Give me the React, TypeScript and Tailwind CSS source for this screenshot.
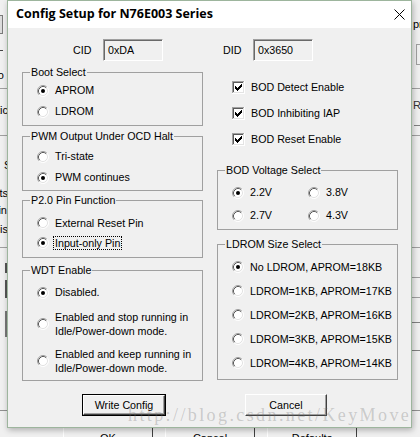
import React from "react";

const SANS = { fontFamily: '"Liberation Sans", Arial, sans-serif' };

function Radio({ checked }: { checked?: boolean }) {
  return (
    <svg width="12" height="12" viewBox="0 0 12 12" className="shrink-0">
      <circle cx="6" cy="6" r="5" fill="#fff" />
      <path d="M9.89 2.11 A5.5 5.5 0 0 0 2.11 9.89" fill="none" stroke="#a0a0a0" />
      <path d="M2.11 9.89 A5.5 5.5 0 0 0 9.89 2.11" fill="none" stroke="#ffffff" />
      <path d="M9.18 2.82 A4.5 4.5 0 0 0 2.82 9.18" fill="none" stroke="#5a5a5a" />
      <path d="M2.82 9.18 A4.5 4.5 0 0 0 9.18 2.82" fill="none" stroke="#e3e3e3" />
      {checked && <circle cx="6" cy="6" r="2" fill="#000" />}
    </svg>
  );
}

function CheckBox() {
  const tops = [5, 6, 7, 6, 5, 4, 3];
  return (
    <svg width="13" height="13" viewBox="0 0 13 13" shapeRendering="crispEdges" className="shrink-0">
      <rect x="0" y="0" width="13" height="13" fill="#fff" />
      <path d="M0 0.5H12M0.5 0V12" stroke="#a0a0a0" />
      <path d="M1 1.5H11M1.5 1V11" stroke="#5a5a5a" />
      <path d="M0 12.5H13M12.5 0V13" stroke="#ffffff" />
      <path d="M1 11.5H12M11.5 1V12" stroke="#e3e3e3" />
      {tops.map((t, i) => (
        <rect key={i} x={3 + i} y={t} width="1" height="3" fill="#000" />
      ))}
    </svg>
  );
}

function Group({
  label,
  className,
  children,
}: {
  label: string;
  className: string;
  children: React.ReactNode;
}) {
  return (
    <div className={`relative border border-[#a0a0a0] ${className}`}>
      <span className="absolute left-[7px] top-[-7px] bg-[#f0f0f0] px-[1px] leading-[13px] whitespace-nowrap">
        {label}
      </span>
      {children}
    </div>
  );
}

function RadioRow({
  label,
  checked,
  h,
  focus,
}: {
  label: string;
  checked?: boolean;
  h: string;
  focus?: boolean;
}) {
  return (
    <div className={`flex items-center ${h}`}>
      <Radio checked={checked} />
      {focus ? (
        <span className="ml-[4px] border border-dotted border-black px-[1px] leading-[12px] whitespace-nowrap">
          {label}
        </span>
      ) : (
        <span className="ml-[6px] whitespace-nowrap">{label}</span>
      )}
    </div>
  );
}

function CheckRow({ label }: { label: string }) {
  return (
    <div className="flex items-center h-[26px]">
      <CheckBox />
      <span className="ml-[6px] whitespace-nowrap">{label}</span>
    </div>
  );
}

function EditBox({ value }: { value: string }) {
  return (
    <div className="w-[60px] h-[22px] border border-t-[#a0a0a0] border-l-[#a0a0a0] border-b-white border-r-white shadow-[inset_1px_1px_0_#696969] flex items-center pl-[4px]">
      {value}
    </div>
  );
}

function Btn({ label, def, w }: { label: string; def?: boolean; w: string }) {
  const inner = (
    <div className="h-full w-full flex items-center justify-center border border-t-white border-l-white border-b-[#404040] border-r-[#404040] shadow-[inset_-1px_-1px_0_#a0a0a0] bg-[#f0f0f0]">
      {label}
    </div>
  );
  return def ? (
    <div className={`${w} h-[22px] border border-black`}>{inner}</div>
  ) : (
    <div className={`${w} h-[22px]`}>{inner}</div>
  );
}

function ParentButton({ label, left }: { label: string; left: string }) {
  return (
    <div
      className={`absolute ${left} top-[423px] w-[90px] h-[30px] border border-t-white border-l-white border-b-[#404040] border-r-[#404040] flex items-center justify-center text-[11px]`}
    >
      {label}
    </div>
  );
}

export default function App() {
  return (
    <div
      className="relative w-[420px] h-[437px] overflow-hidden bg-[#f0f0f0] text-black text-[10.7px]"
      style={SANS}
    >
      {/* Parent window fragments (behind the dialog) */}
      <div className="absolute left-[-12px] top-[15px] w-[15px] h-[19px] border border-[#7a7a7a] bg-[#dcdcdc]" />
      <div className="absolute left-0 top-[50px] w-[3px] h-[1px] bg-[#444]" />
      <div className="absolute right-[416px] top-[68px] text-[11px] leading-[14px]">Info</div>
      <div className="absolute left-0 top-[88px] w-[420px] h-[1px] bg-[#a0a0a0]" />
      <div className="absolute right-[412px] top-[103px] text-[11px] leading-[14px]">Statistic</div>
      <div className="absolute left-0 top-[135px] w-[420px] h-[1px] bg-[#a0a0a0]" />
      <div className="absolute left-[4px] top-[158px] text-[11px] leading-[14px]">S</div>
      <div className="absolute right-[412px] top-[186px] text-[11px] leading-[14px]">Counts</div>
      <div className="absolute right-[413px] top-[203px] text-[11px] leading-[14px]">Pin</div>
      <div className="absolute right-[412px] top-[222px] text-[11px] leading-[14px]">Dis</div>
      <div className="absolute left-0 top-[247px] w-[420px] h-[1px] bg-[#a0a0a0]" />
      <div className="absolute left-[5px] top-[263px] w-[2px] h-[10px] bg-[#555]" />
      <div className="absolute left-[5px] top-[280px] w-[2px] h-[18px] bg-[#555]" />
      <div className="absolute left-[5px] top-[311px] w-[2px] h-[26px] bg-[#777]" />
      <div className="absolute left-0 top-[410px] w-[420px] h-[1px] bg-[#909090]" />

      <div className="absolute left-[413px] top-[17px] text-[11px] leading-[14px]">pr</div>
      <div className="absolute left-[416px] top-[44px] w-[20px] h-[21px] border border-[#a0a0a0]" />
      <div className="absolute left-[413px] top-[98px] text-[11px] leading-[14px] text-[#333]">Ra</div>
      <div className="absolute left-[414px] top-[125px] w-[6px] h-[1px] bg-[#808080]" />
      <div className="absolute left-[412px] top-[277px] w-[8px] h-[1px] bg-[#a0a0a0]" />
      <div className="absolute left-[412px] top-[297px] w-[8px] h-[1px] bg-[#a0a0a0]" />
      <div className="absolute left-[412px] top-[322px] w-[8px] h-[1px] bg-[#808080]" />
      <div className="absolute left-[412px] top-[350px] w-[8px] h-[1px] bg-[#808080]" />

      <ParentButton label="OK" left="left-[63px]" />
      <ParentButton label="Cancel" left="left-[165px]" />
      <ParentButton label="Defaults" left="left-[267px]" />

      {/* Dialog window */}
      <div className="absolute left-[7px] top-0 w-[405px] h-[428px] border border-[#9db59d] bg-[#f0f0f0] shadow-[1px_2px_6px_rgba(0,0,0,0.28)] flex flex-col">
        <div className="h-[27px] bg-white flex items-center pl-[8px] pr-[6px] shrink-0">
          <span
            className="font-bold text-[12.5px] text-black"
            style={{ fontFamily: '"Open Sans", "Noto Sans", sans-serif' }}
          >
            Config Setup for N76E003 Series
          </span>
          <svg width="11" height="11" viewBox="0 0 11 11" className="ml-auto">
            <path d="M0.5 0.5L10.5 10.5M10.5 0.5L0.5 10.5" stroke="#000" strokeWidth="1" />
          </svg>
        </div>

        <div className="pl-[14px] flex flex-col">
          {/* CID / DID row */}
          <div className="flex items-center mt-[11px] h-[22px]">
            <span className="ml-[51px] w-[30px]">CID</span>
            <EditBox value="0xDA" />
            <span className="ml-[60px] w-[30px]">DID</span>
            <EditBox value="0x3650" />
          </div>

          <div className="flex gap-[14px]">
            {/* Left column */}
            <div className="w-[181px] flex flex-col">
              <Group label="Boot Select" className="mt-[11px] h-[54px] pt-[7px] pl-[14px]">
                <RadioRow label="APROM" checked h="h-[21px]" />
                <RadioRow label="LDROM" h="h-[21px]" />
              </Group>
              <Group label="PWM Output Under OCD Halt" className="mt-[10px] h-[55px] pt-[9px] pl-[14px]">
                <RadioRow label="Tri-state" h="h-[21px]" />
                <RadioRow label="PWM continues" checked h="h-[21px]" />
              </Group>
              <Group label="P2.0 Pin Function" className="mt-[9px] h-[58px] pt-[12px] pl-[14px]">
                <RadioRow label="External Reset Pin" h="h-[20px]" />
                <RadioRow label="Input-only Pin" checked focus h="h-[20px]" />
              </Group>
              <Group label="WDT Enable" className="mt-[12px] h-[111px] pt-[11px] pl-[14px]">
                <RadioRow label="Disabled." checked h="h-[21px]" />
                <div className="flex items-center mt-[7px]">
                  <Radio />
                  <div className="ml-[6px] leading-[14px]">
                    <div>Enabled and stop running in</div>
                    <div>Idle/Power-down mode.</div>
                  </div>
                </div>
                <div className="flex items-center mt-[9px]">
                  <Radio />
                  <div className="ml-[6px] leading-[14px]">
                    <div>Enabled and keep running in</div>
                    <div>Idle/Power-down mode.</div>
                  </div>
                </div>
              </Group>
            </div>

            {/* Right column */}
            <div className="w-[181px] flex flex-col">
              <div className="mt-[13px] pl-[15px]">
                <CheckRow label="BOD Detect Enable" />
                <CheckRow label="BOD Inhibiting IAP" />
                <CheckRow label="BOD Reset Enable" />
              </div>
              <Group label="BOD Voltage Select" className="mt-[18px] h-[60px] pt-[10px] pl-[14px]">
                <div className="grid grid-cols-[76px_auto]">
                  <RadioRow label="2.2V" checked h="h-[23px]" />
                  <RadioRow label="3.8V" h="h-[23px]" />
                  <RadioRow label="2.7V" h="h-[23px]" />
                  <RadioRow label="4.3V" h="h-[23px]" />
                </div>
              </Group>
              <Group label="LDROM Size Select" className="mt-[14px] h-[136px] pt-[10px] pl-[14px]">
                <RadioRow label="No LDROM, APROM=18KB" checked h="h-[24px]" />
                <RadioRow label="LDROM=1KB, APROM=17KB" h="h-[24px]" />
                <RadioRow label="LDROM=2KB, APROM=16KB" h="h-[24px]" />
                <RadioRow label="LDROM=3KB, APROM=15KB" h="h-[24px]" />
                <RadioRow label="LDROM=4KB, APROM=14KB" h="h-[24px]" />
              </Group>
            </div>
          </div>

          {/* Buttons */}
          <div className="flex mt-[13px]">
            <div className="ml-[60px]">
              <Btn label="Write Config" def w="w-[84px]" />
            </div>
            <div className="ml-[79px]">
              <Btn label="Cancel" w="w-[82px]" />
            </div>
          </div>
        </div>
      </div>

      {/* Watermark */}
      <div
        className="absolute left-[128px] top-[405px] text-[18px] leading-[20px] tracking-[2.4px] whitespace-nowrap pointer-events-none text-[rgba(110,110,110,0.3)]"
        style={{ fontFamily: '"Liberation Serif", "Times New Roman", serif' }}
      >
        http://blog.csdn.net/KeyMove
      </div>
    </div>
  );
}
